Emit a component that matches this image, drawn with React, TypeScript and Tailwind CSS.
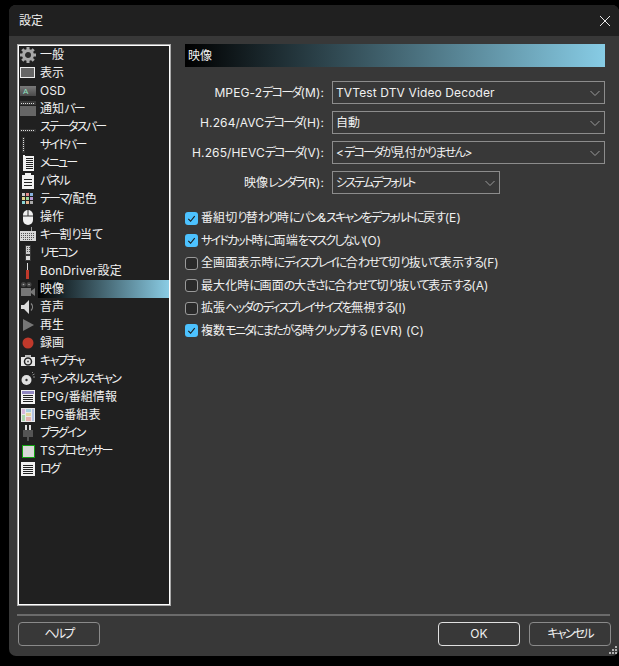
import type { ReactNode } from "react";

// Yu Gothic UI has much narrower kana than Noto, so tighten by script
function T({ children }: { children: string }) {
  const runs = children.match(/[\u30A0-\u30FF]+|[\u3040-\u309F]+|[^\u3040-\u30FF]+/g) ?? [];
  return (
    <>
      {runs.map((run, i) => {
        const code = run.charCodeAt(0);
        const cls =
          code >= 0x30a0 && code <= 0x30ff
            ? "tracking-[-1.8px]"
            : code >= 0x3040 && code <= 0x309f
              ? "tracking-[-1.5px]"
              : "tracking-[0.12px]";
        return (
          <span key={i} className={cls}>
            {run}
          </span>
        );
      })}
    </>
  );
}

function Gear() {
  return (
    <svg viewBox="0 0 16 16" className="size-4">
      <circle cx="8" cy="8" r="4.500" fill="#2a2a2a" stroke="#a8a8a8" strokeWidth="3" />
      <path d="M8 0v3M8 13v3M0 8h3M13 8h3M2.300 2.300l2 2M11.700 11.700l2 2M13.700 2.300l-2 2M4.300 11.700l-2 2" stroke="#a8a8a8" strokeWidth="3" />
    </svg>
  );
}

function Display() {
  return (
    <svg viewBox="0 0 16 16" className="size-4" shapeRendering="crispEdges">
      <rect x="0.500" y="2.500" width="14" height="10" fill="#666" stroke="#eee" />
    </svg>
  );
}

function Osd() {
  return (
    <svg viewBox="0 0 16 16" className="size-4">
      <defs>
        <linearGradient id="osd" x1="0" x2="0" y1="0" y2="1">
          <stop offset="0" stopColor="#7a7a7a" />
          <stop offset="1" stopColor="#4a4a4a" />
        </linearGradient>
      </defs>
      <rect x="0" y="3" width="16" height="10" fill="url(#osd)" />
      <text x="3" y="11" fontSize="8" fill="#8fe0c0" fontFamily="Liberation Sans">A</text>
    </svg>
  );
}

function NotifyBar() {
  return (
    <svg viewBox="0 0 16 18" className="h-[18px] w-4" shapeRendering="crispEdges">
      <rect x="0" y="1" width="16" height="4" fill="#3a3a3a" />
      <path d="M1 3.500h14" stroke="#ddd" strokeDasharray="1 1" />
      <rect x="0" y="6" width="16" height="10" fill="#666" />
    </svg>
  );
}

function StatusBar() {
  return (
    <svg viewBox="0 0 16 16" className="size-4" shapeRendering="crispEdges">
      <rect x="0" y="10" width="16" height="3" fill="#333" />
      <path d="M1 11.500h14" stroke="#ddd" strokeDasharray="1 1" />
    </svg>
  );
}

function SideBar() {
  return (
    <svg viewBox="0 0 16 16" className="size-4" shapeRendering="crispEdges">
      <rect x="2" y="0" width="3" height="16" fill="#333" />
      <path d="M3.500 1v14" stroke="#ddd" strokeDasharray="1 1" />
    </svg>
  );
}

function Lines({ accent }: { accent?: string }) {
  return (
    <svg viewBox="0 0 16 16" className="size-4" shapeRendering="crispEdges">
      <rect x="1" y="1" width="14" height="14" fill="#f2f2f2" />
      {accent && <rect x="2" y="2" width="12" height="3" fill={accent} />}
      <path d={accent ? "M3 6.500h10M3 8.500h10M3 10.500h10M3 12.500h10" : "M3 4.500h10M3 6.500h10M3 8.500h10M3 10.500h10M3 12.500h10"} stroke="#222" />
    </svg>
  );
}

function Menu() {
  return (
    <svg viewBox="0 0 16 16" className="size-4" shapeRendering="crispEdges">
      <rect x="3" y="0" width="2" height="16" fill="#f2f2f2" />
      <rect x="5" y="1" width="9" height="15" fill="#f2f2f2" />
      <path d="M6 3.500h7M6 5.500h7M6 7.500h7M6 9.500h7M6 11.500h7M6 13.500h7" stroke="#222" />
    </svg>
  );
}

function Panel() {
  return (
    <svg viewBox="0 0 16 16" className="size-4" shapeRendering="crispEdges">
      <rect x="2" y="2" width="12" height="14" fill="#f2f2f2" />
      <rect x="5" y="0" width="6" height="3" fill="#f2f2f2" />
      <path d="M4 6.500h8M4 9.500h8M4 12.500h8" stroke="#222" />
    </svg>
  );
}

function Theme() {
  const colors = ["#c9c9c9", "#e28a8a", "#8ab4e2", "#e2d48a", "#9ad49a", "#b99ad4", "#8ad4d4", "#e2b08a", "#aaaaaa"];
  return (
    <svg viewBox="0 0 16 16" className="size-4" shapeRendering="crispEdges">
      {colors.map((c, i) => (
        <rect key={i} x={2 + (i % 3) * 4} y={2 + Math.floor(i / 3) * 4} width="3" height="3" fill={c} />
      ))}
    </svg>
  );
}

function Mouse() {
  return (
    <svg viewBox="0 0 16 16" className="size-4">
      <rect x="3" y="1" width="10" height="15" rx="5" fill="#f0f0f0" />
      <path d="M8 1v6M3 7h10" stroke="#333" strokeWidth="1" />
    </svg>
  );
}

function Keyboard() {
  return (
    <svg viewBox="0 0 16 16" className="size-4" shapeRendering="crispEdges">
      <rect x="0" y="4" width="16" height="10" fill="#d8d8d8" />
      <path d="M11.500 0v4" stroke="#999" />
      <path d="M1 6.500h14M1 8.500h14M1 10.500h14M3 12.500h10" stroke="#555" strokeDasharray="1 1" />
    </svg>
  );
}

function Remote() {
  return (
    <svg viewBox="0 0 16 16" className="size-4" shapeRendering="crispEdges">
      <rect x="5" y="0" width="6" height="16" fill="#3a3a3a" />
      <rect x="6" y="1" width="4" height="8" fill="#ccc" />
      <path d="M7 2v6M9 2v6" stroke="#555" strokeDasharray="1 1" />
      <rect x="6" y="11" width="4" height="4" fill="#ddd" />
    </svg>
  );
}

function Driver() {
  return (
    <svg viewBox="0 0 16 16" className="size-4" shapeRendering="crispEdges">
      <rect x="7" y="0" width="1" height="7" fill="#ddd" />
      <rect x="6" y="7" width="3" height="9" fill="#c0392b" />
    </svg>
  );
}

function Camera() {
  return (
    <svg viewBox="0 0 16 16" className="size-4">
      <circle cx="3.500" cy="3.500" r="2.500" fill="#444" />
      <circle cx="3.500" cy="3.500" r="0.800" fill="#aaa" />
      <circle cx="9" cy="3.500" r="2.500" fill="#444" />
      <circle cx="9" cy="3.500" r="0.800" fill="#aaa" />
      <rect x="1" y="7" width="10" height="8" fill="#777" />
      <path d="M11 10l4-3v8l-4-3z" fill="#777" />
    </svg>
  );
}

function Speaker() {
  return (
    <svg viewBox="0 0 16 16" className="size-4">
      <path d="M1 6h3l5-5v14l-5-5H1z" fill="#dcdcdc" />
      <path d="M11 4.500c2 2 2 5 0 7" fill="none" stroke="#888" strokeWidth="1.200" />
    </svg>
  );
}

function Play() {
  return (
    <svg viewBox="0 0 16 16" className="size-4">
      <path d="M3 2l11 6-11 6z" fill="#777" />
    </svg>
  );
}

function Rec() {
  return (
    <svg viewBox="0 0 16 16" className="size-4">
      <circle cx="8" cy="8" r="5.500" fill="#c0392b" />
    </svg>
  );
}

function Capture() {
  return (
    <svg viewBox="0 0 16 16" className="size-4">
      <rect x="1" y="4" width="14" height="9" fill="#e6e6e6" />
      <rect x="5" y="2" width="6" height="2" fill="#bbb" />
      <circle cx="8" cy="8.500" r="3.500" fill="#e6e6e6" stroke="#222" strokeWidth="1.500" />
      <circle cx="8" cy="8.500" r="1" fill="#555" />
    </svg>
  );
}

function Scan() {
  return (
    <svg viewBox="0 0 16 16" className="size-4">
      <circle cx="6.500" cy="9" r="5" fill="#e0e0e0" />
      <circle cx="6.500" cy="9" r="1.200" fill="#333" />
      <path d="M12 2l1-1M13 6h2M12.500 4l2-1" stroke="#888" />
    </svg>
  );
}

function EpgTable() {
  return (
    <svg viewBox="0 0 16 16" className="size-4" shapeRendering="crispEdges">
      <rect x="1" y="1" width="14" height="14" fill="#e8e8e8" />
      <rect x="2" y="2" width="3" height="5" fill="#d7b6dc" />
      <rect x="6" y="2" width="5" height="3" fill="#a7cfe0" />
      <rect x="6" y="6" width="5" height="3" fill="#e4d69c" />
      <rect x="2" y="8" width="3" height="6" fill="#a9d4a9" />
      <rect x="6" y="10" width="5" height="4" fill="#e4b0b0" />
      <rect x="12" y="2" width="2" height="12" fill="#b0c0e0" />
    </svg>
  );
}

function Plug() {
  return (
    <svg viewBox="0 0 16 16" className="size-4" shapeRendering="crispEdges">
      <rect x="5" y="0" width="2" height="5" fill="#ddd" />
      <rect x="9" y="0" width="2" height="5" fill="#ddd" />
      <rect x="3" y="5" width="10" height="7" fill="#555" />
      <rect x="7" y="12" width="2" height="4" fill="#555" />
    </svg>
  );
}

function Processor() {
  return (
    <svg viewBox="0 0 16 16" className="size-4" shapeRendering="crispEdges">
      <rect x="2" y="2" width="12" height="12" fill="#d8d8d8" stroke="#12a012" strokeWidth="1" />
    </svg>
  );
}

const items: { label: string; icon: ReactNode }[] = [
  { label: "一般", icon: <Gear /> },
  { label: "表示", icon: <Display /> },
  { label: "OSD", icon: <Osd /> },
  { label: "通知バー", icon: <NotifyBar /> },
  { label: "ステータスバー", icon: <StatusBar /> },
  { label: "サイドバー", icon: <SideBar /> },
  { label: "メニュー", icon: <Menu /> },
  { label: "パネル", icon: <Panel /> },
  { label: "テーマ/配色", icon: <Theme /> },
  { label: "操作", icon: <Mouse /> },
  { label: "キー割り当て", icon: <Keyboard /> },
  { label: "リモコン", icon: <Remote /> },
  { label: "BonDriver設定", icon: <Driver /> },
  { label: "映像", icon: <Camera /> },
  { label: "音声", icon: <Speaker /> },
  { label: "再生", icon: <Play /> },
  { label: "録画", icon: <Rec /> },
  { label: "キャプチャ", icon: <Capture /> },
  { label: "チャンネルスキャン", icon: <Scan /> },
  { label: "EPG/番組情報", icon: <Lines accent="#8f86c0" /> },
  { label: "EPG番組表", icon: <EpgTable /> },
  { label: "プラグイン", icon: <Plug /> },
  { label: "TSプロセッサー", icon: <Processor /> },
  { label: "ログ", icon: <Lines /> },
];

function Combo({ label, value, short }: { label: string; value: string; short?: boolean }) {
  return (
    <div className="flex h-[23px] items-center">
      <label className="w-[139px] text-right">
        <T>{label}</T>
      </label>
      <div
        className={`ml-[8px] flex h-[23px] items-center justify-between border border-[#8c8c8c] pl-[3px] pr-[2px] ${short ? "w-[168px]" : "w-[273px]"}`}
      >
        <span>
          <T>{value}</T>
        </span>
        <svg viewBox="0 0 12 12" className="mr-[1px] size-3 text-[#9a9a9a]" fill="none" stroke="currentColor" strokeWidth="1">
          <path d="M1.500 4l4.500 4.500L10.500 4" />
        </svg>
      </div>
    </div>
  );
}

function Check({ label, checked }: { label: string; checked?: boolean }) {
  return (
    <div className="flex h-[22.5px] items-center">
      {checked ? (
        <span className="flex size-[13px] items-center justify-center rounded-[3px] bg-[#4cc2ff]">
          <svg viewBox="0 0 12 12" className="size-[11px]" fill="none" stroke="#1a1a1a" strokeWidth="1.200">
            <path d="M2.500 6.500l2.500 2.500 4.500-5.500" />
          </svg>
        </span>
      ) : (
        <span className="size-[13px] rounded-[3px] border border-[#9a9a9a] bg-[#2a2a2a]" />
      )}
      <span className="ml-[3px]">
        <T>{label}</T>
      </span>
    </div>
  );
}

function Button({ label, primary }: { label: string; primary?: boolean }) {
  return (
    <button
      className={`h-[24px] w-[82px] rounded-[4px] border text-[12px] text-[#f0f0f0] ${primary ? "border-[#e0e0e0]" : "border-[#8a8a8a]"}`}
    >
      <T>{label}</T>
    </button>
  );
}

export default function App() {
  return (
    <div
      className="h-[666px] w-[619px] overflow-hidden bg-black pl-[9px] pt-[5px] text-[12px] leading-[18px] text-[#f0f0f0] [font-feature-settings:'palt']"
      style={{ fontFamily: '"Inter", "Noto Sans CJK JP", sans-serif' }}
    >
      <div className="relative flex h-[651px] w-[610px] flex-col overflow-hidden rounded-[7px] bg-[#383838]">
        <div className="flex h-[31px] shrink-0 items-center justify-between bg-[#202020] pl-[10px] pr-[8px]">
          <span>設定</span>
          <svg viewBox="0 0 12 12" className="size-3" fill="none" stroke="#e8e8e8" strokeWidth="1">
            <path d="M1 1l10 10M11 1L1 11" />
          </svg>
        </div>
        <div className="flex h-[570px] shrink-0 pl-[8px] pt-[8px]">
          <div className="h-[562px] w-[154px] shrink-0 border border-[#a8a8a8]">
            <div className="h-full border border-white bg-[#202020]">
              {items.map((item) => {
                const selected = item.label === "映像";
                return (
                  <div key={item.label} className="flex h-[18px] items-center">
                    <span className="flex w-[19px] shrink-0 justify-center pr-[1px]">{item.icon}</span>
                    <span
                      className={`flex h-[18px] flex-1 items-center pl-[2px] ${selected ? "bg-linear-to-r/srgb from-black to-[#8accE4]" : ""}`}
                    >
                      <span>
                        <T>{item.label}</T>
                      </span>
                    </span>
                  </div>
                );
              })}
            </div>
          </div>
          <div className="ml-[14px] w-[420px]">
            <div className="flex h-[23px] items-center bg-linear-to-r/srgb from-black to-[#87cce5] pl-[3px]">
              映像
            </div>
            <div className="mt-[14px] flex flex-col gap-[7px]">
              <Combo label="MPEG-2デコーダ(M):" value="TVTest DTV Video Decoder" />
              <Combo label="H.264/AVCデコーダ(H):" value="自動" />
              <Combo label="H.265/HEVCデコーダ(V):" value="<デコーダが見付かりません>" />
              <Combo label="映像レンダラ(R):" value="システムデフォルト" short />
            </div>
            <div className="mt-[13px] flex flex-col">
              <Check label="番組切り替わり時にパン&スキャンをデフォルトに戻す(E)" checked />
              <Check label="サイドカット時に両端をマスクしない(O)" checked />
              <Check label="全画面表示時にディスプレイに合わせて切り抜いて表示する(F)" />
              <Check label="最大化時に画面の大きさに合わせて切り抜いて表示する(A)" />
              <Check label="拡張ヘッダのディスプレイサイズを無視する(I)" />
              <Check label="複数モニタにまたがる時クリップする (EVR) (C)" checked />
            </div>
          </div>
        </div>
        <div className="ml-[8px] mt-[8px] h-[2px] w-[593px] shrink-0 bg-[#6b6b6b]" />
        <div className="mt-[6px] flex pl-[9px]">
          <Button label="ヘルプ" />
          <div className="ml-[338px] flex gap-[9px]">
            <Button label="OK" primary />
            <Button label="キャンセル" />
          </div>
        </div>
        <svg viewBox="0 0 8 8" className="absolute bottom-[2px] right-[2px] size-2" fill="#b0b0b0" shapeRendering="crispEdges">
          <path d="M6 0h2v2H6zM3 3h2v2H3zM6 3h2v2H6zM0 6h2v2H0zM3 6h2v2H3zM6 6h2v2H6z" />
        </svg>
      </div>
    </div>
  );
}
